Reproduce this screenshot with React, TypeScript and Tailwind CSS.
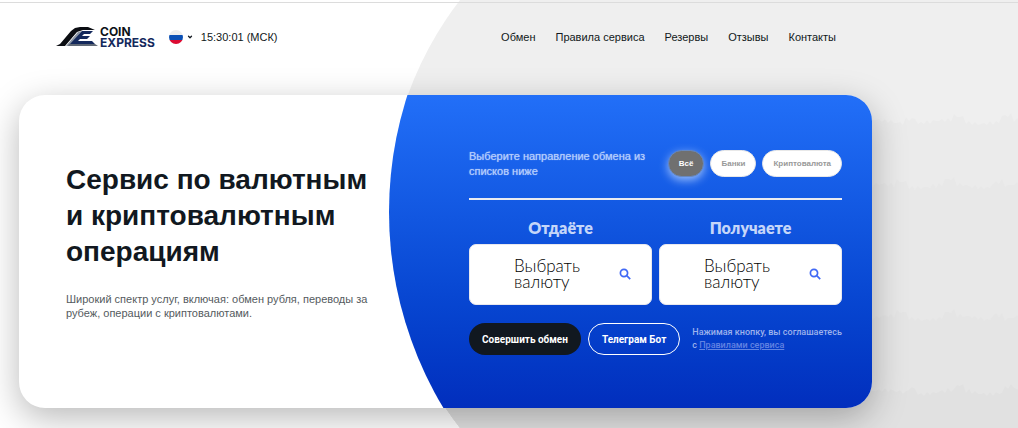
import { useState } from 'react';
import { ChevronDown } from 'lucide-react';

const navLinks = ['Обмен', 'Правила сервиса', 'Резервы', 'Отзывы', 'Контакты'];

const filters = [
    { id: 'all', label: 'Всё' },
    { id: 'banks', label: 'Банки' },
    { id: 'crypto', label: 'Криптовалюта' },
];

const bands = [
    { y: 122, fill: '#ebebeb' },
    { y: 186, fill: '#e8e8e8' },
    { y: 318, fill: '#e5e5e5' },
    { y: 392, fill: '#e1e1e1' },
];

// uneven top edge of a background band
function bandPath(y: number) {
    let d = `M0 700 L0 ${y}`;
    for (let x = 0; x <= 640; x += 3) {
        const wave = Math.sin((x + y) * 0.09) * 2 + Math.sin(x * 0.9 + y) * 2;
        const peak = Math.sin(x * 0.13 + y) > 0.75 ? -5 : 0;
        d += ` L${x} ${Math.round(y + wave + peak)}`;
    }
    return d + ' L640 700 Z';
}

function Backdrop() {
    return (
        <div className="absolute top-[-136px] right-0 left-[387px] h-[700px] overflow-hidden rounded-l-[350px] bg-[#efefef]">
            <svg
                className="h-full w-full"
                viewBox="0 -136 631 700"
                preserveAspectRatio="none"
                aria-hidden="true"
            >
                {bands.map((band) => (
                    <path key={band.y} d={bandPath(band.y)} fill={band.fill} />
                ))}
            </svg>
        </div>
    );
}

function Logo() {
    return (
        <a href="#" className="flex items-center gap-px">
            <svg className="h-5 w-[43px]" viewBox="0 0 43 20" aria-hidden="true">
                <path d="M0 19 L4 17 L15 4 L19 1 L24 0 H32 L39 3 L27 3 L21 5 L9 19 Z" fill="#0b0d12" />
                <path d="M10 19 L22 5 L26 4 L15 17 L13 19 Z" fill="#8b95a3" />
                <path d="M26 4 H37 L34 7 H28 L26 9 H34 L31 12 H24 L22 14 H36 L39 17 H14 Z" fill="#14295c" />
                <path d="M13 17 H39 L42 19 H12 Z" fill="#5f6875" />
            </svg>
            <span className="flex flex-col font-['Inter'] text-[12px] leading-[11px] font-bold">
                <span className="text-[#0d1117]">COIN</span>
                <span className="text-[#14295c]">EXPRESS</span>
            </span>
        </a>
    );
}

function Flag() {
    return (
        <svg className="h-[14px] w-[14px] rounded-full" viewBox="0 0 14 14" aria-hidden="true">
            <rect width="14" height="5" fill="#eeeeee" />
            <rect y="5" width="14" height="5" fill="#0b50b5" />
            <rect y="10" width="14" height="4" fill="#dc0a32" />
        </svg>
    );
}

function CurrencyPicker({ label }: { label: string }) {
    return (
        <div className="flex flex-1 flex-col items-stretch gap-1">
            <span className="text-center font-['Lato'] text-[16px] leading-6 font-extrabold text-[#c5d6f9]">
                {label}
            </span>
            <button
                type="button"
                aria-label={`${label}: выбрать валюту`}
                className="flex h-[61px] items-center justify-between rounded-[7px] border border-[#e8e8ee] bg-white pr-5 pb-[2px] pl-11 text-left"
            >
                <span className="w-20 font-['Lato'] text-[17px] leading-4 font-light text-black">
                    Выбрать валюту
                </span>
                <svg className="h-3 w-3" viewBox="0 0 12 12" fill="none" stroke="#4169f5" strokeWidth="1.7" aria-hidden="true">
                    <circle cx="5" cy="5" r="3.6" />
                    <path d="M7.7 7.7 L11.2 11.2" />
                </svg>
            </button>
        </div>
    );
}

export default function App() {
    const [filter, setFilter] = useState('all');

    return (
        <div className="relative min-h-screen overflow-hidden bg-white pt-[2px] font-['Liberation_Sans',sans-serif] text-[#111820]">
            <Backdrop />
            <div className="relative border-t border-[#dcdcdc]">
                <header className="flex h-[68px] max-w-[836px] items-center justify-between pl-14">
                    <div className="flex items-center">
                        <Logo />
                        <button type="button" aria-label="Язык: русский" className="ml-[14px] flex items-center gap-1">
                            <Flag />
                            <ChevronDown size={6} strokeWidth={5} />
                        </button>
                        <time className="ml-2 text-[11px] leading-4">15:30:01 (МСК)</time>
                    </div>
                    <nav className="flex gap-5 text-[11px] leading-4">
                        {navLinks.map((link) => (
                            <a key={link} href="#">
                                {link}
                            </a>
                        ))}
                    </nav>
                </header>

                <main className="mt-6 ml-[19px] flex max-w-[853px] overflow-hidden rounded-[26px] bg-white shadow-[0_10px_35px_rgba(0,0,0,0.28)]">
                    <section className="flex flex-1 flex-col pt-[67px] pl-[47px]">
                        <h1 className="text-[28px] leading-9 font-bold whitespace-nowrap">
                            Сервис по валютным
                            <br />
                            и криптовалютным
                            <br />
                            операциям
                        </h1>
                        <p className="mt-[22px] text-[11px] leading-[14px] text-[#555b60]">
                            Широкий спектр услуг, включая: обмен рубля, переводы за
                            <br />
                            рубеж, операции с криптовалютами.
                        </p>
                    </section>

                    <section className="w-[483px] shrink-0 bg-linear-to-b from-[#226ff8] to-[#022ebd] pt-[53px] pr-[30px] pb-[53px] pl-20 [clip-path:circle(380px_at_380px_117px)]">
                        <div className="flex items-start justify-between border-b-2 border-[#e9ebf1] pb-[19px]">
                            <p className="pt-px text-[11px] leading-[15px] text-[#b4ccfc] [text-shadow:0_0_1px_#a9c4fb]">
                                Выберите направление обмена из
                                <br />
                                списков ниже
                            </p>
                            <div className="mt-[2px] flex gap-[6px]">
                                {filters.map((item) => (
                                    <button
                                        key={item.id}
                                        type="button"
                                        aria-pressed={filter === item.id}
                                        onClick={() => setFilter(item.id)}
                                        className={`h-[27px] rounded-full border px-[10px] text-[8px] font-bold ${
                                            filter === item.id
                                                ? 'border-[#6688c0] bg-[#707070] text-white shadow-[0_3px_10px_rgba(190,215,255,0.8)]'
                                                : 'border-[#e8e8e8] bg-white text-[#999999]'
                                        }`}
                                    >
                                        {item.label}
                                    </button>
                                ))}
                            </div>
                        </div>

                        <div className="mt-4 flex gap-[7px]">
                            <CurrencyPicker label="Отдаёте" />
                            <CurrencyPicker label="Получаете" />
                        </div>

                        <div className="mt-[18px] flex items-center font-['Roboto']">
                            <button type="button" className="h-8 rounded-full bg-[#111820] px-[13px] text-[10px] font-bold whitespace-nowrap text-white">
                                Совершить обмен
                            </button>
                            <button type="button" className="ml-[7px] h-8 rounded-full border border-white px-[13px] text-[10px] font-bold whitespace-nowrap text-white">
                                Телеграм Бот
                            </button>
                            <p className="ml-3 text-[9px] leading-[13px] font-medium whitespace-nowrap text-[#9db2ec]">
                                Нажимая кнопку, вы соглашаетесь
                                <br />
                                с{' '}
                                <a href="#" className="text-[#6283e2] underline">
                                    Правилами сервиса
                                </a>
                            </p>
                        </div>
                    </section>
                </main>
            </div>
        </div>
    );
}
